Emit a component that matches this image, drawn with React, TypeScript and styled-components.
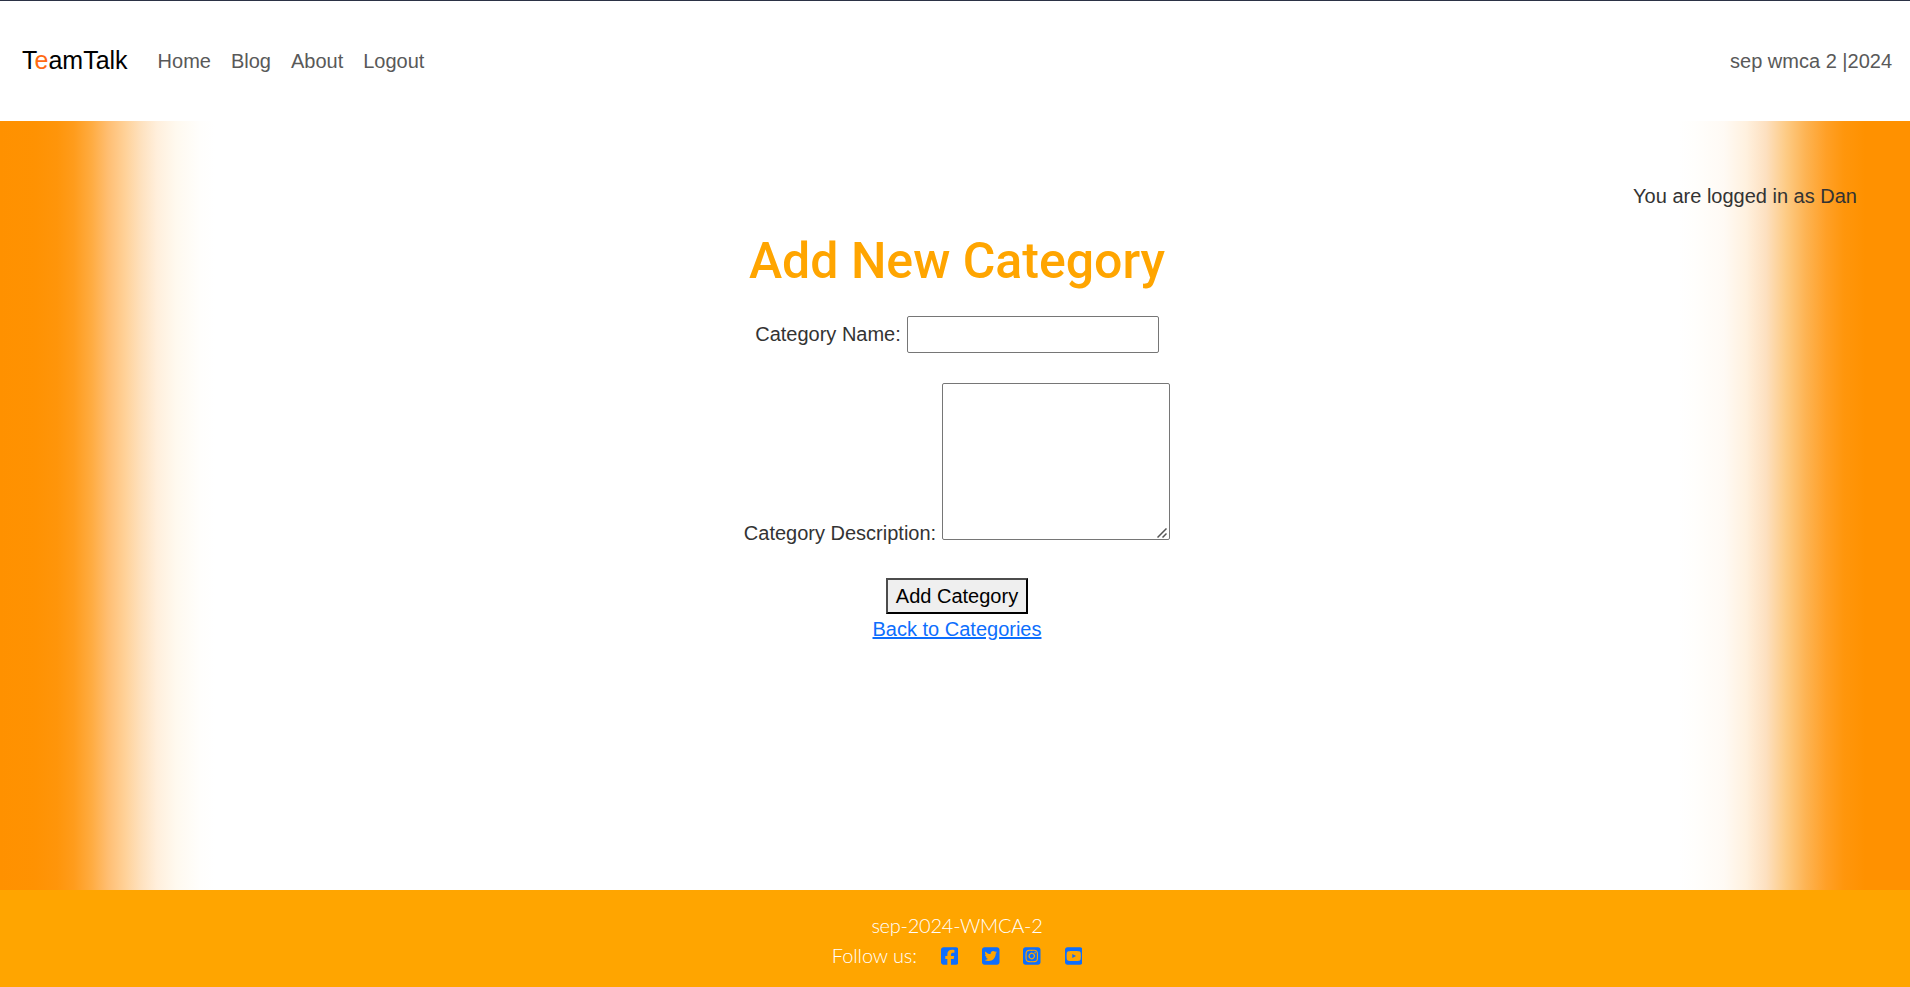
import React from "react";
import styled, { createGlobalStyle } from "styled-components";
import {
  FaSquareFacebook,
  FaSquareTwitter,
  FaSquareInstagram,
  FaSquareYoutube,
} from "react-icons/fa6";

const GlobalStyle = createGlobalStyle`
  *, *::before, *::after { box-sizing: border-box; }
  body {
    margin: 0;
    overflow: hidden;
    background: #fff;
    color: #333;
    font: 400 20px/30px "Liberation Sans", Arial, sans-serif;
  }
`;

const Page = styled.div`
  display: flex;
  flex-direction: column;
  height: 100vh;
`;

const Navbar = styled.nav`
  display: flex;
  align-items: center;
  height: 121px;
  flex: none;
  padding: 0 18px 0 22px;
  border-top: 1px solid #2b3245;
  background: #fff;
`;

const Brand = styled.a`
  margin-right: 20px;
  padding-bottom: 2px;
  color: #000;
  font-size: 25px;
  line-height: 37px;
  text-decoration: none;
`;

const Accent = styled.span`
  color: #ff6a13;
`;

const NavLink = styled.a`
  padding: 0 10px;
  color: #595959;
  text-decoration: none;
`;

const NavNote = styled.span`
  margin-left: auto;
  color: #595959;
`;

const Main = styled.main`
  display: flex;
  flex-direction: column;
  align-items: center;
  flex: 1;
  padding: 60px 0 0 4px;
  background:
    linear-gradient(
      to right,
      #ff9100 0, #ff9202 35px, #ff950a 57px, #ff9c1c 74px, #ffac42 92px,
      #ffbe72 108px, #ffd29a 126px, #fee1be 141px, #ffefdc 157px,
      #fff9ef 176px, #fffefc 200px, #ffffff00 215px
    ),
    linear-gradient(
      to left,
      #ff9100 0, #ff9100 45px, #ff960c 66px, #ffa027 84px, #fdb352 104px,
      #fdcb85 124px, #fde0c0 144px, #fff1df 164px, #fffaf4 186px,
      #fffefc 215px, #fff 232px
    );
`;

const LoginStatus = styled.p`
  align-self: flex-end;
  margin: 0 53px 20px 0;
`;

const Title = styled.h1`
  margin: 0 0 25px;
  color: #ffa500;
  font: 500 50px/60px Roboto, sans-serif;
`;

const Field = styled.div<{ $gap: number }>`
  display: flex;
  align-items: flex-end;
  gap: 6px;
  margin-bottom: ${(p) => p.$gap}px;
`;

const Label = styled.label<{ $offset: number }>`
  margin-bottom: ${(p) => p.$offset}px;
`;

const TextInput = styled.input`
  width: 252px;
  height: 37px;
  padding: 1px 2px;
  border: 1px solid #767676;
  border-radius: 2px;
  background: #fff;
  font: inherit;
`;

const TextAreaFrame = styled.div`
  display: flex;
  position: relative;
`;

const TextArea = styled.textarea`
  width: 228px;
  height: 157px;
  padding: 2px;
  border: 1px solid #767676;
  border-radius: 2px;
  background: #fff;
  font: inherit;
  resize: none;
`;

const ResizeGrip = styled.svg`
  position: absolute;
  right: 3px;
  bottom: 2px;
  pointer-events: none;
`;

const SubmitButton = styled.button`
  width: 142px;
  height: 36px;
  padding: 0;
  border: 2px solid;
  border-color: #4c4c4c #000 #000 #4c4c4c;
  background: #efefef;
  color: #000;
  font: inherit;
  line-height: 30px;
`;

const BackLink = styled.a`
  color: #0d6efd;
  text-decoration: underline;
`;

const Footer = styled.footer`
  display: flex;
  flex-direction: column;
  align-items: center;
  flex: none;
  height: 97px;
  padding: 20px 0 0 4px;
  background: #ffa500;
  color: #fff;
  font-family: Lato, sans-serif;
  font-weight: 300;
`;

const Cohort = styled.div`
  letter-spacing: -0.25px;
`;

const SocialRow = styled.div`
  display: flex;
  align-items: center;
  letter-spacing: -0.1px;
`;

const SocialLink = styled.a`
  display: flex;
  width: 17.5px;
  margin: 1px 0 0 23.8px;
  color: #0d6efd;

  svg {
    flex: none;
    width: 17.5px;
    height: 20px;
  }
`;

const socials = [
  { name: "Facebook", Icon: FaSquareFacebook },
  { name: "Twitter", Icon: FaSquareTwitter },
  { name: "Instagram", Icon: FaSquareInstagram },
  { name: "YouTube", Icon: FaSquareYoutube },
];

export default function App() {
  return (
    <>
      <GlobalStyle />
      <Page>
        <Navbar>
          <Brand href="#">
            T<Accent>e</Accent>amTalk
          </Brand>
          {["Home", "Blog", "About", "Logout"].map((item) => (
            <NavLink key={item} href="#">
              {item}
            </NavLink>
          ))}
          <NavNote>sep wmca 2 |2024</NavNote>
        </Navbar>
        <Main>
          <LoginStatus>You are logged in as Dan</LoginStatus>
          <Title>Add New Category</Title>
          <Field $gap={30}>
            <Label htmlFor="name" $offset={4}>
              Category Name:
            </Label>
            <TextInput id="name" type="text" />
          </Field>
          <Field $gap={38}>
            <Label htmlFor="description" $offset={-8}>
              Category Description:
            </Label>
            <TextAreaFrame>
              <TextArea id="description" />
              <ResizeGrip width="10" height="10" viewBox="0 0 10 10">
                <path
                  d="M0.5 9.5L9.5 0.5M5.5 9.5L9.5 5.5"
                  stroke="#555"
                  strokeWidth="1.5"
                  fill="none"
                />
              </ResizeGrip>
            </TextAreaFrame>
          </Field>
          <SubmitButton type="button">Add Category</SubmitButton>
          <BackLink href="#">Back to Categories</BackLink>
        </Main>
        <Footer>
          <Cohort>sep-2024-WMCA-2</Cohort>
          <SocialRow>
            <span>Follow us:</span>
            {socials.map(({ name, Icon }) => (
              <SocialLink key={name} href="#" aria-label={name}>
                <Icon />
              </SocialLink>
            ))}
          </SocialRow>
        </Footer>
      </Page>
    </>
  );
}
